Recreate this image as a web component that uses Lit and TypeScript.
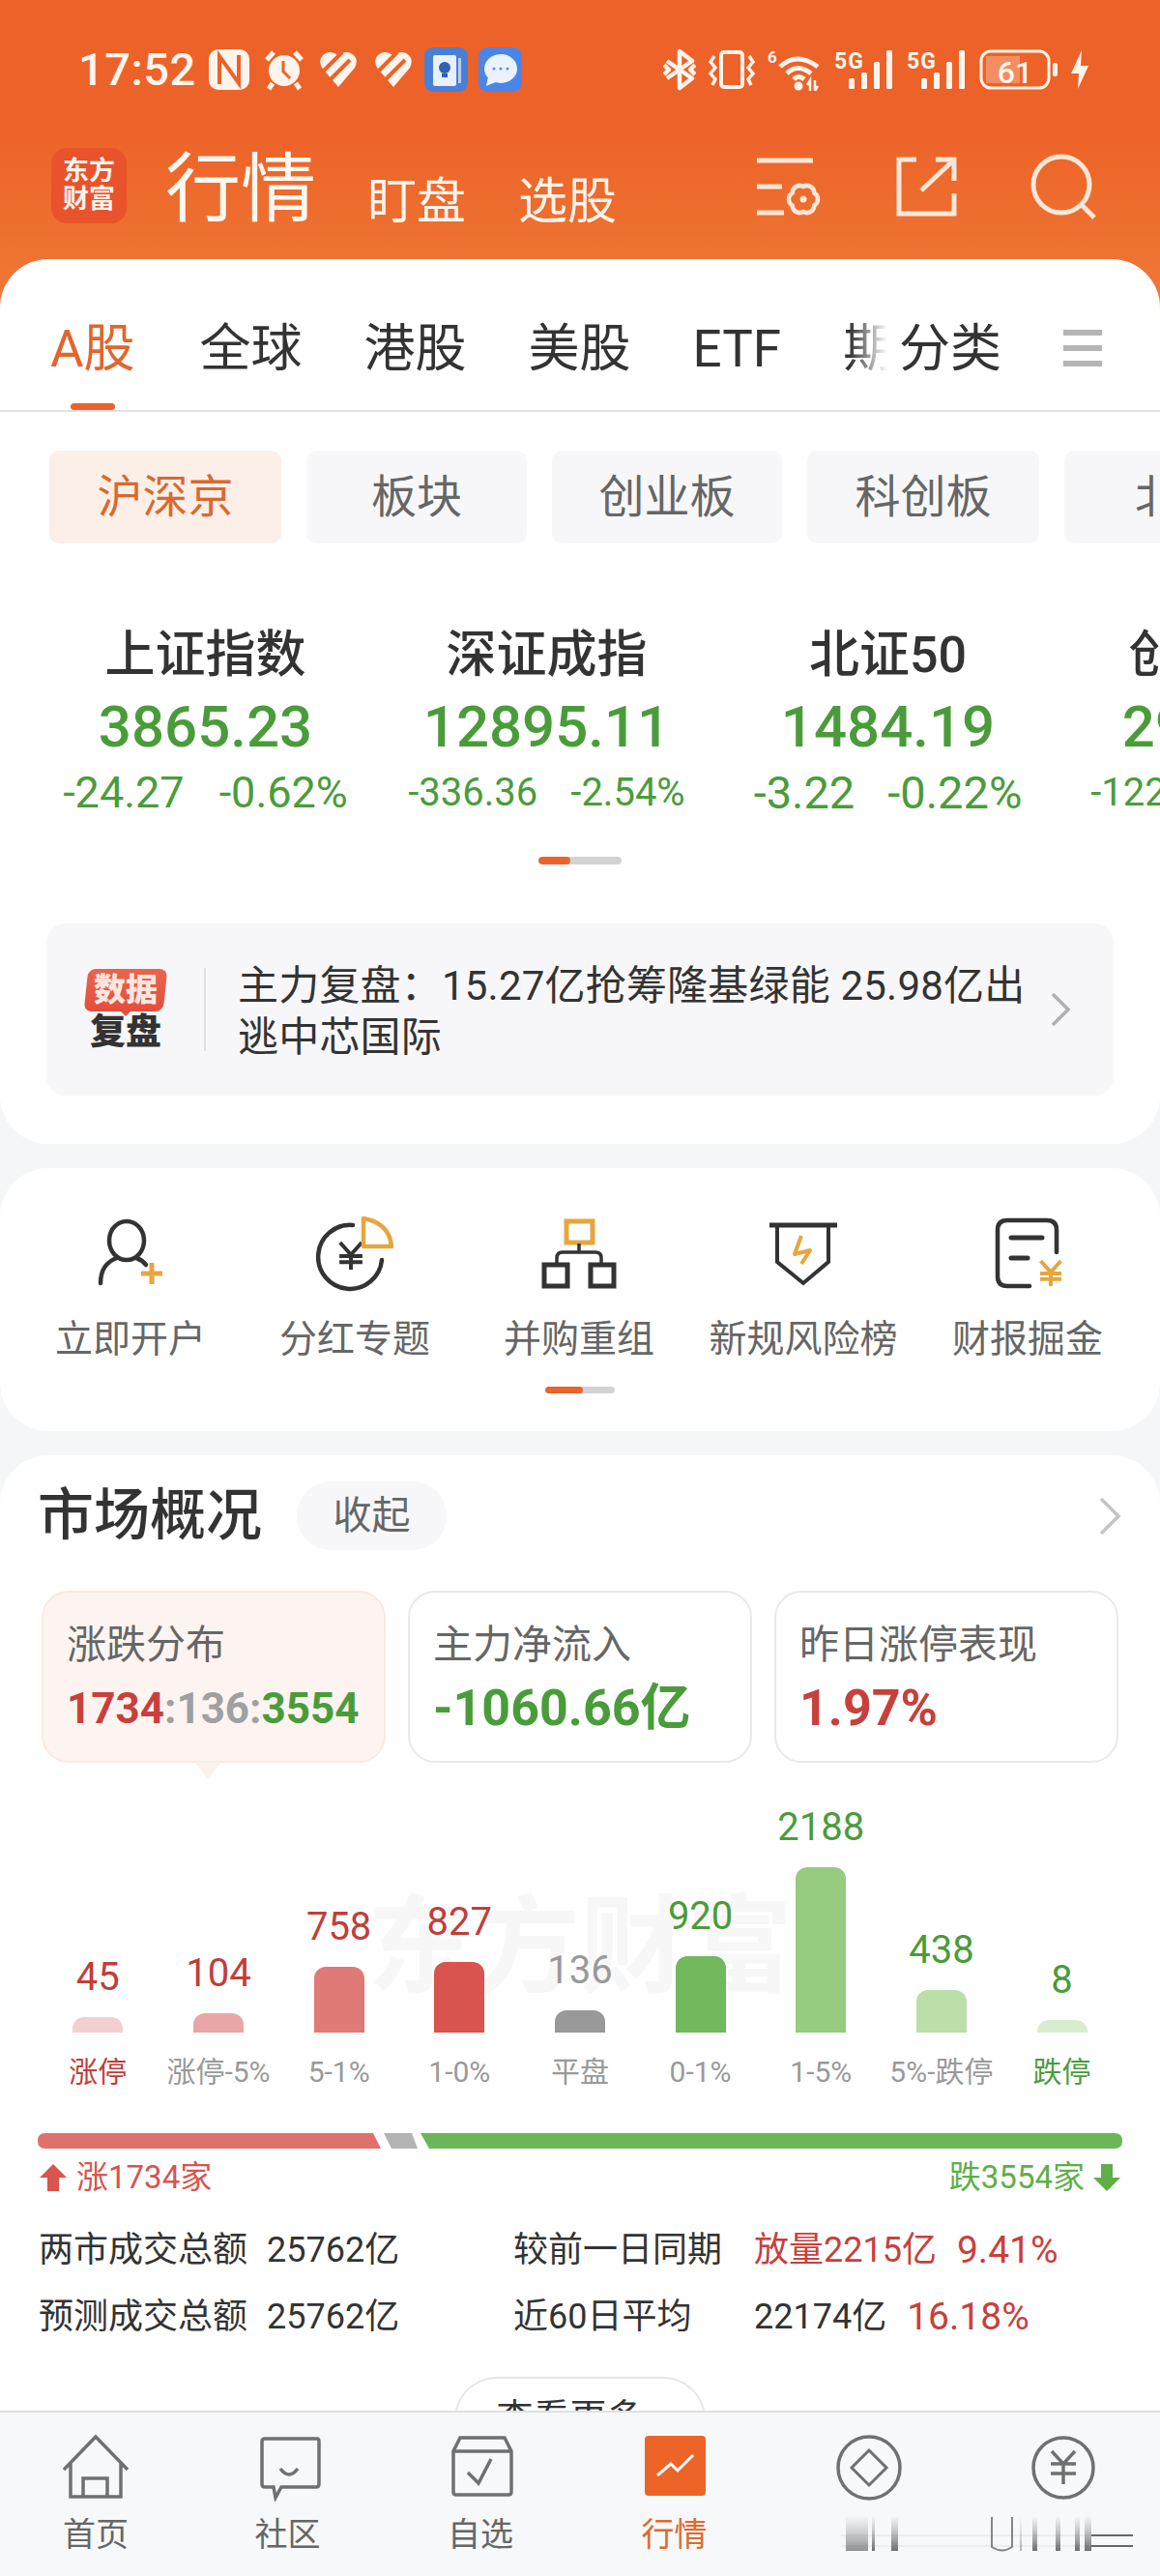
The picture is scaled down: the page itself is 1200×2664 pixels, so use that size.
import { LitElement, html, css, svg } from "lit";
import { customElement } from "lit/decorators.js";

const tabs = ["全球", "港股", "美股", "ETF"];
const chips = [
  { t: "板块", w: 228 },
  { t: "创业板", w: 238 },
  { t: "科创板", w: 240 },
  { t: "北证", w: 240 },
];
const indices = [
  { n: "上证指数", p: "3865.23", a: "-24.27", b: "-0.62%", s: 45, g: 36 },
  { n: "深证成指", p: "12895.11", a: "-336.36", b: "-2.54%", s: 40, g: 34 },
  { n: "北证50", p: "1484.19", a: "-3.22", b: "-0.22%", s: 47, g: 34 },
  { n: "创业板指", p: "2964.33", a: "-122.41", b: "-3.97%", s: 40, g: 34 },
];
const bars = [
  { v: "45", h: 16, c: "#f3d0d0", t: "#c23d3a", l: "涨停", lc: "#c23d3a" },
  { v: "104", h: 20, c: "#e8a6a6", t: "#c23d3a", l: "涨停-5%", lc: "#999" },
  { v: "758", h: 68, c: "#e07a76", t: "#c23d3a", l: "5-1%", lc: "#999" },
  { v: "827", h: 73, c: "#d9534f", t: "#c23d3a", l: "1-0%", lc: "#999" },
  { v: "136", h: 23, c: "#999", t: "#999", l: "平盘", lc: "#999" },
  { v: "920", h: 79, c: "#72b85c", t: "#4a9c3a", l: "0-1%", lc: "#999" },
  { v: "2188", h: 171, c: "#96cb80", t: "#4a9c3a", l: "1-5%", lc: "#999" },
  { v: "438", h: 44, c: "#badfa8", t: "#4a9c3a", l: "5%-跌停", lc: "#999" },
  { v: "8", h: 13, c: "#d8edcd", t: "#4a9c3a", l: "跌停", lc: "#4a9c3a" },
];

const D = "#333";
const G = "#e6a63f";
const yen = (x: number, y: number, s: number, c: string, w: number) => svg`
  <path d="M${x - s * 0.8} ${y - s} L${x} ${y - s * 0.1} L${x + s * 0.8} ${y - s} M${x - s * 0.85} ${y} H${x + s * 0.85} M${x - s * 0.85} ${y + s * 0.45} H${x + s * 0.85} M${x} ${y - s * 0.1} V${y + s}" fill="none" stroke="${c}" stroke-width="${w}"/>`;

const shortcutIcons = [
  svg`<ellipse cx="36" cy="26" rx="18" ry="20" fill="none" stroke="${D}" stroke-width="4.5"/>
      <path d="M9 70 Q9 50 26 44 M46 44 Q52 46 56 51" fill="none" stroke="${D}" stroke-width="4.5" stroke-linecap="round"/>
      <path d="M62 49 V71 M51 60 H73" fill="none" stroke="${G}" stroke-width="5"/>`,
  svg`<path d="M38 10 A33 33 0 1 0 68 46" fill="none" stroke="${D}" stroke-width="4.5" stroke-linecap="round"/>
      ${yen(36, 42, 14, D, 4)}
      <path d="M49 3 Q76 8 78 32 H49 Z" fill="none" stroke="${G}" stroke-width="4.5" stroke-linejoin="round"/>`,
  svg`<rect x="27" y="6" width="27" height="22" fill="none" stroke="${G}" stroke-width="5"/>
      <path d="M40 29 V38 M17 50 V44 Q17 38 23 38 H57 Q63 38 63 44 V50" fill="none" stroke="${D}" stroke-width="3.5"/>
      <rect x="4" y="51" width="24" height="22" fill="none" stroke="${D}" stroke-width="5"/>
      <rect x="52" y="51" width="24" height="22" fill="none" stroke="${D}" stroke-width="5"/>`,
  svg`<path d="M13 9 V48 L40 70 L66 48 V9" fill="none" stroke="${D}" stroke-width="4"/>
      <path d="M5 10 H75" stroke="${D}" stroke-width="5"/>
      <path d="M38 21 L31 40 L47 36 L38 50" fill="none" stroke="${G}" stroke-width="4" stroke-linejoin="round"/>`,
  svg`<path d="M70 38 V15 Q70 5 60 5 H19 Q9 5 9 15 V63 Q9 73 19 73 H42" fill="none" stroke="${D}" stroke-width="4.5" stroke-linecap="round"/>
      <path d="M23 23 H55 M23 44 H40" stroke="${D}" stroke-width="5" stroke-linecap="round"/>
      ${yen(64, 60, 13, G, 4)}`,
];
const shortcuts = ["立即开户", "分红专题", "并购重组", "新规风险榜", "财报掘金"];

const navIcons = [
  svg`<path d="M2 37 L35 3 L68 37 M9 29 V65 H61 V29 M22 65 V46 H47 V65" fill="none" stroke="#707070" stroke-width="3.5"/>`,
  svg`<path d="M11 5 H65 Q67 5 67 8 V52 Q67 55 64 55 H28 L22 66 L20 55 H11 Q8 55 8 52 V8 Q8 5 11 5 Z M27 36 Q36 48 45 36" fill="none" stroke="#707070" stroke-width="3.5"/>`,
  svg`<path d="M14 4 H60 L67 18 V60 Q67 63 64 63 H10 Q7 63 7 60 V18 Z M7 18 H67 M22 40 L33 51 L46 26" fill="none" stroke="#707070" stroke-width="3.5"/>`,
  svg`<rect x="4" y="2" width="63" height="62" rx="4" fill="#ec6427"/><path d="M17 43 L31 31 L38 38 L54 22" fill="none" stroke="#fff" stroke-width="3"/>`,
  svg`<circle cx="35" cy="35" r="32" fill="none" stroke="#707070" stroke-width="3.5"/><path d="M35 17 L53 35 L35 53 L17 35 Z" fill="none" stroke="#707070" stroke-width="3"/>`,
  svg`<circle cx="35" cy="35" r="31" fill="none" stroke="#707070" stroke-width="3.5"/><path d="M23 18 L35 31 L47 18 M22 31 H48 M22 41 H48 M35 31 V52" fill="none" stroke="#707070" stroke-width="3.5"/>`,
];
const navs = ["首页", "社区", "自选", "行情", "", ""];

const W = "#fff4ec";
const fiveG = svg`<text x="0" y="21" font-size="23" font-weight="700" font-family="Roboto" fill="${W}" textLength="30">5G</text><rect x="15" y="31" width="6" height="11" rx="1.5" fill="${W}"/><rect x="28" y="25" width="6" height="17" rx="1.5" fill="${W}"/><rect x="41" y="14" width="6" height="28" rx="1.5" fill="${W}"/><rect x="54" y="2" width="6" height="40" rx="1.5" fill="${W}"/>`;
const statusRight = [
  { w: 34, g: svg`<path d="M4 13 L30 31 L17 41 V3 L30 13 L4 31 M1 17 L6 22 L1 27 M33 17 L28 22 L33 27" fill="none" stroke="${W}" stroke-width="4.5" stroke-linejoin="round"/>` },
  { w: 50, g: svg`<rect x="14" y="4" width="22" height="36" rx="3" fill="none" stroke="${W}" stroke-width="4"/><path d="M7 8 L3 14 L8 20 L3 26 L8 32 L5 38 M43 8 L47 14 L42 20 L47 26 L42 32 L45 38" fill="none" stroke="${W}" stroke-width="3.5"/>` },
  { w: 57, g: svg`<text x="0" y="15" font-size="17" font-weight="700" font-family="Roboto" fill="${W}">6</text><path d="M13 19 Q30 3 52 19 M20 26 Q31 15 45 26 M27 32 Q32 27 38 32" fill="none" stroke="${W}" stroke-width="5"/><circle cx="32" cy="39" r="4.5" fill="${W}"/><path d="M44 44 V33 L41 38 M49 33 V44 L52 39" fill="none" stroke="${W}" stroke-width="2.5"/>` },
  { w: 63, g: fiveG },
  { w: 63, g: fiveG },
  { w: 82, g: svg`<rect x="2" y="3" width="70" height="38" rx="10" fill="none" stroke="${W}" stroke-width="3"/><path d="M7 8 H42 V36 H7 Z" fill="${W}" opacity=".3"/><text x="37" y="36" text-anchor="middle" font-size="32" font-weight="500" font-family="Roboto" fill="${W}">61</text><rect x="76" y="15" width="5" height="14" rx="2" fill="${W}"/>` },
  { w: 20, g: svg`<path d="M12 2 L1 26 H9 L8 42 L19 18 H11 Z" fill="${W}"/>` },
];

@customElement("app-root")
export class AppRoot extends LitElement {
  static styles = css`
    :host { display: block; width: 1200px; height: 2664px; overflow: hidden; background: #f5f6f8;
      font-family: Roboto, "Noto Sans CJK SC", sans-serif; color: #333; }
    .page { height: 2664px; display: flex; flex-direction: column; position: relative; }
    .main { flex: 1; min-height: 0; overflow: hidden; }
    svg { display: block; flex: none; }

    .top { background: linear-gradient(#ed6228 0, #ed6228 130px, #ee7b37 330px) no-repeat; background-size: 100% 330px; }
    .status { display: flex; align-items: center; height: 48px; padding: 48px 73px 0 81px; }
    .time { font-size: 47px; font-weight: 500; line-height: 48px; width: 135px; letter-spacing: .5px; color: #fff4ec; }
    .sl { display: flex; align-items: center; gap: 15px; }
    .sr { display: flex; align-items: center; gap: 12px; margin-left: auto; }
    .head { display: flex; align-items: flex-end; height: 80px; padding: 57px 66px 35px 53px; color: #fff4ec; }
    .logo { width: 78px; height: 78px; border-radius: 16px; background: #e8532b; display: flex; flex-direction: column; align-items: center; justify-content: center; font-size: 27px; line-height: 29px; font-weight: 700; margin-bottom: 2px; }
    .title { font-size: 78px; line-height: 84px; margin: 0 0 -6px 40px; color: #fff7f0; }
    .sub { font-size: 51px; line-height: 54px; margin-left: 53px; margin-bottom: -3px; }
    .sub + .sub { margin-left: 54px; }
    .tools { display: flex; align-items: center; margin-left: auto; align-self: center; gap: 76px; }

    .card { background: #fff; border-radius: 50px; }
    .tabs { display: flex; height: 156px; padding: 0 0 0 52px; border-bottom: 2px solid #e2e2e2; box-sizing: content-box; overflow: hidden; }
    .tabscroll { display: flex; gap: 64px; width: 866px; overflow: hidden; padding-top: 63px; flex: none;
      -webkit-mask-image: linear-gradient(90deg, #000 95.5%, transparent 100%); mask-image: linear-gradient(90deg, #000 95.5%, transparent 100%); }
    .tab { font-size: 53px; line-height: 60px; flex: none; display: flex; flex-direction: column; color: #333; }
    .tab.on { color: #e0662f; margin-right: 3px; }
    .tab i { display: block; width: 46px; height: 7px; border-radius: 4px; background: #e8642c; margin: 26px auto 0; }
    .tabextra { font-size: 53px; line-height: 60px; padding-top: 63px; flex: none; margin-left: 12px; color: #333; }
    .menu { margin: 72px 0 0 64px; flex: none; }

    .chips { display: flex; gap: 26px; margin: 40px 0 0 51px; width: 1149px; overflow: hidden; }
    .chip { height: 96px; line-height: 96px; flex: none; background: #f7f7f9; border-radius: 10px; text-align: center; font-size: 47px; color: #666; }
    .chip.on { background: #fcefe7; color: #d9692e; width: 240px; }

    .indices { display: flex; margin-top: 86px; width: 1200px; overflow: hidden; padding-left: 36px; box-sizing: border-box; }
    .ix { flex: none; width: 353px; display: flex; flex-direction: column; align-items: center; }
    .ix b { font-size: 52px; line-height: 60px; font-weight: 500; color: #333; }
    .ix .p { font-size: 60px; line-height: 70px; margin-top: 9px; font-weight: 500; color: #4a9c3a; }
    .ix .c { display: flex; align-items: center; line-height: 50px; margin-top: 8px; color: #4a9c3a; white-space: nowrap; }
    .dots { width: 86px; height: 8px; border-radius: 4px; background: #d2d3d5; overflow: hidden; }
    .dots i { display: block; height: 100%; background: #e8642c; border-radius: 4px; }
    .d1 { margin: 41px auto 0; }
    .banner { margin: 61px 48px 0; height: 178px; background: #f7f7f9; border-radius: 20px; display: flex; align-items: center; }
    .blogo { width: 88px; margin-left: 38px; display: flex; flex-direction: column; align-items: center; }
    .badge { position: relative; display: block; width: 82px; height: 44px; color: #fbe6df; font-size: 33px; line-height: 44px; font-weight: 900; text-align: center; }
    .badge span { position: relative; }
    .badge::before { content: ""; position: absolute; inset: 0; border-radius: 8px; background: linear-gradient(#e8654f, #e54d3d); transform: skewX(-6deg); }
    .badge::after { content: ""; position: absolute; left: 36px; bottom: -5px; border: 5px solid transparent; border-top-color: #e54d3d; border-bottom: 0; }
    .blogo b { font-size: 37px; line-height: 38px; font-weight: 900; color: #333; margin-top: 3px; }
    .sep { width: 2px; height: 86px; background: #dfe0e2; margin: 0 33px 0 37px; flex: none; }
    .btxt { font-size: 42px; line-height: 53px; width: 830px; color: #333; letter-spacing: .2px; padding-top: 3px; }
    .chev { margin-left: auto; margin-right: 44px; }
    .c1 { padding-bottom: 50px; }

    .c2 { margin-top: 25px; height: 272px; padding-top: 49px; box-sizing: border-box; }
    .sc { display: grid; grid-template-columns: repeat(5, 232px); padding-left: 19px; }
    .sc div { display: flex; flex-direction: column; align-items: center; }
    .sc span { font-size: 39px; line-height: 50px; margin-top: 23px; color: #666; white-space: nowrap; }
    .d2 { width: 72px; height: 7px; margin: 24px auto 0; }

    .c3 { margin-top: 25px; height: 1100px; padding-top: 27px; box-sizing: border-box; }
    .mh { display: flex; align-items: center; height: 71px; padding: 0 40px 0 39px; }
    .mh h2 { margin: 0; font-size: 58px; line-height: 75px; font-weight: 500; color: #333; }
    .fold { margin-left: 36px; width: 155px; height: 71px; border-radius: 35px; background: #f7f7f9; text-align: center; line-height: 72px; font-size: 40px; color: #666; }
    .mh svg { margin-left: auto; }
    .stats { display: grid; grid-template-columns: repeat(3, 356px); gap: 23px; padding-left: 43px; margin-top: 42px; }
    .stat { height: 178px; border: 2px solid #e9e9e9; border-radius: 28px; box-sizing: border-box; padding: 29px 0 0 24px; position: relative; background: #fff; }
    .stat.on { background: #fdf4f1; border-color: #fae9e3; }
    .stat.on::after { content: ""; position: absolute; left: 156px; bottom: -19px; width: 0; height: 0; border: 14px solid transparent; border-top: 18px solid #fdf1ec; border-bottom: 0; }
    .stat p { margin: 0; font-size: 41px; line-height: 50px; color: #666; }
    .stat strong { display: block; margin-top: 15px; font-size: 52px; line-height: 52px; font-weight: 700; white-space: nowrap; }
    .stat.on strong { font-size: 44px; }
    .r { color: #c8403c; } .g { color: #4a9c3a; } .n { color: #a0a0a0; }

    .chartwrap { position: relative; margin-top: 42px; }
    .mark { position: absolute; left: 380px; top: 90px; font-size: 110px; line-height: 120px; font-weight: 700; color: #f7f7f7; white-space: nowrap; }
    .chart { position: relative; display: grid; grid-template-columns: repeat(9, 124.67px); padding-left: 39px; align-items: end; height: 237px; }
    .bc { display: flex; flex-direction: column; align-items: center; }
    .bc em { font-style: normal; font-size: 40px; line-height: 50px; margin-bottom: 16px; }
    .bc i { display: block; width: 52px; border-radius: 12px 12px 0 0; }
    .labels { position: relative; display: grid; grid-template-columns: repeat(9, 124.67px); padding-left: 39px; margin-top: 21px; }
    .labels span { font-size: 30px; line-height: 40px; text-align: center; white-space: nowrap; }
    .split { margin: 43px 0 0 39px; }
    .ud { display: flex; align-items: center; padding: 0 41px; margin-top: 10px; height: 40px; font-size: 33px; line-height: 40px; }
    .ud span { display: block; }
    .ud .u { color: #d9534f; margin-left: 10px; }
    .ud .d { color: #5fae48; margin-left: auto; margin-right: 9px; }
    .rows { display: grid; grid-template-columns: 236px 255px 249px auto; padding-left: 40px; margin-top: 30px; row-gap: 19px; font-size: 36px; line-height: 50px; color: #333; }
    .rows div { white-space: nowrap; }
    .rows .v { display: flex; gap: 21px; }
    .rows .pc { font-size: 39px; }
    .rd { color: #c8403c; }
    .more { margin: 37px auto 0; width: 260px; height: 90px; border: 2px solid #e6e6e6; border-radius: 44px; text-align: center; font-size: 38px; line-height: 80px; box-sizing: border-box; color: #333; }

    .nav { flex: none; position: relative; height: 171px; box-sizing: border-box; background: #f7f8fa; border-top: 2px solid #e0e0e0; display: grid; grid-template-columns: 198px 199px 200px 201px 201px 201px; padding: 22px 0 0 0; }
    .ni { display: flex; flex-direction: column; align-items: center; }
    .ni span { font-size: 34px; line-height: 44px; margin-top: 12px; color: #666; }
    .ni.on span { color: #dd6a2e; }
    .smear { position: absolute; left: 870px; top: 106px; }
  `;

  render() {
    return html`<div class="page">
      <div class="main">
        <div class="top">
          <div class="status">
            <div class="time">17:52</div>
            <div class="sl">
              <svg width="42" height="44" viewBox="0 0 42 44"><rect x="0" y="1" width="42" height="42" rx="10" fill="${W}"/><path d="M11 37 V8 L31 36 V7" fill="none" stroke="#ed6228" stroke-width="4"/></svg>
              <svg width="42" height="44" viewBox="0 0 42 44"><circle cx="21" cy="23" r="16" fill="${W}"/><path d="M3 12 L10 4 M39 12 L32 4 M9 36 L5 42 M33 36 L37 42" stroke="${W}" stroke-width="5"/><path d="M20 13 V24 L27 31" fill="none" stroke="#ed6228" stroke-width="3"/></svg>
              <svg width="40" height="44" viewBox="0 0 40 44"><path d="M20 40 L3 20 Q-2 10 7 5 Q14 2 20 8 Q26 2 33 5 Q42 10 37 20 Z" fill="${W}"/><path d="M4 24 L24 4 M12 32 L32 12" stroke="#ed6228" stroke-width="4"/></svg>
              <svg width="40" height="44" viewBox="0 0 40 44" style="margin-left:2px"><path d="M20 40 L3 20 Q-2 10 7 5 Q14 2 20 8 Q26 2 33 5 Q42 10 37 20 Z" fill="${W}"/><path d="M4 24 L24 4 M12 32 L32 12" stroke="#ed6228" stroke-width="4"/></svg>
              <svg width="45" height="46" viewBox="0 0 45 46" style="margin-left:-3px"><rect width="45" height="46" rx="9" fill="#4a7fd6"/><rect x="9" y="8" width="24" height="32" rx="2" fill="#e8f0fb"/><rect x="35" y="11" width="3" height="26" fill="#b8cdf0"/><circle cx="21" cy="21" r="6" fill="#2f62b5"/><rect x="18" y="27" width="6" height="4" fill="#2f62b5"/></svg>
              <svg width="45" height="46" viewBox="0 0 45 46" style="margin-left:-4px"><rect width="45" height="46" rx="9" fill="#4a86e8"/><ellipse cx="23" cy="22" rx="17" ry="15" fill="#eaf2fd"/><path d="M10 30 L8 40 L20 35 Z" fill="#eaf2fd"/><circle cx="16" cy="22" r="1.6" fill="#6a90c8"/><circle cx="23" cy="22" r="1.6" fill="#6a90c8"/><circle cx="30" cy="22" r="1.6" fill="#6a90c8"/></svg>
            </div>
            <div class="sr">
              ${statusRight.map((s) => html`<svg width="${s.w}" height="44" viewBox="0 0 ${s.w} 44">${s.g}</svg>`)}
            </div>
          </div>
          <div class="head">
            <div class="logo"><div>东方</div><div>财富</div></div>
            <div class="title">行情</div>
            <div class="sub">盯盘</div>
            <div class="sub">选股</div>
            <div class="tools">
              <svg width="68" height="62" viewBox="0 0 68 62"><path d="M0 4 H58 M0 31 H26 M0 58 H28" stroke="#fde6d6" stroke-width="5"/><path d="M48 31 A7.5 7.5 0 0 1 59.3 37.5 A7.5 7.5 0 0 1 59.3 50.5 A7.5 7.5 0 0 1 48 57 A7.5 7.5 0 0 1 36.7 50.5 A7.5 7.5 0 0 1 36.7 37.5 A7.5 7.5 0 0 1 48 31 Z" fill="none" stroke="#fde6d6" stroke-width="4.5"/><circle cx="48" cy="44" r="3.5" fill="#fde6d6"/></svg>
              <svg width="63" height="62" viewBox="0 0 63 62"><path d="M21 3 H3 V59 H60 V38 M41 3 H60 V25 M26 35 L58 5" fill="none" stroke="#fde6d6" stroke-width="5"/></svg>
              <svg width="68" height="68" viewBox="0 0 68 68"><circle cx="32" cy="32" r="29" fill="none" stroke="#fde6d6" stroke-width="5"/><path d="M53 53 L66 66" stroke="#fde6d6" stroke-width="5"/></svg>
            </div>
          </div>
          <div class="card c1">
            <div class="tabs">
              <div class="tabscroll">
                <div class="tab on">A股<i></i></div>
                ${tabs.map((t) => html`<div class="tab">${t}</div>`)}
                <div class="tab">期货</div>
              </div>
              <div class="tabextra">分类</div>
              <svg class="menu" width="40" height="40" viewBox="0 0 40 40"><path d="M0 4 H40 M0 20 H40 M0 36 H40" stroke="#b5b5b5" stroke-width="6"/></svg>
            </div>
            <div class="chips">
              <div class="chip on">沪深京</div>
              ${chips.map((c) => html`<div class="chip" style="width:${c.w}px">${c.t}</div>`)}
            </div>
            <div class="indices">
              ${indices.map((i) => html`<div class="ix">
                <b>${i.n}</b>
                <div class="p">${i.p}</div>
                <div class="c" style="font-size:${i.s}px;gap:${i.g}px"><span>${i.a}</span><span>${i.b}</span></div>
              </div>`)}
            </div>
            <div class="dots d1"><i style="width:38%"></i></div>
            <div class="banner">
              <div class="blogo"><div class="badge"><span>数据</span></div><b>复盘</b></div>
              <div class="sep"></div>
              <div class="btxt">主力复盘：15.27亿抢筹隆基绿能 25.98亿出逃中芯国际</div>
              <svg class="chev" width="22" height="38" viewBox="0 0 22 38"><path d="M3 3 L19 19 L3 35" fill="none" stroke="#b0b0b0" stroke-width="3.5"/></svg>
            </div>
          </div>
        </div>
        <div class="card c2">
          <div class="sc">
            ${shortcuts.map((t, i) => html`<div><svg width="80" height="80" viewBox="0 0 80 80">${shortcutIcons[i]}</svg><span>${t}</span></div>`)}
          </div>
          <div class="dots d2"><i style="width:54%"></i></div>
        </div>
        <div class="card c3">
          <div class="mh">
            <h2>市场概况</h2>
            <div class="fold">收起</div>
            <svg width="24" height="40" viewBox="0 0 24 40"><path d="M3 2 L21 20 L3 38" fill="none" stroke="#c4c4c4" stroke-width="3.5"/></svg>
          </div>
          <div class="stats">
            <div class="stat on"><p>涨跌分布</p><strong><span class="r">1734</span><span class="n">:136:</span><span class="g">3554</span></strong></div>
            <div class="stat"><p>主力净流入</p><strong class="g">-1060.66亿</strong></div>
            <div class="stat"><p>昨日涨停表现</p><strong class="r">1.97%</strong></div>
          </div>
          <div class="chartwrap">
            <div class="mark">东方财富</div>
            <div class="chart">
              ${bars.map((b) => html`<div class="bc"><em style="color:${b.t}">${b.v}</em><i style="height:${b.h}px;background:${b.c}"></i></div>`)}
            </div>
            <div class="labels">
              ${bars.map((b) => html`<span style="color:${b.lc}">${b.l}</span>`)}
            </div>
          </div>
          <svg class="split" width="1122" height="16" viewBox="0 0 1122 16">
            <path d="M8 0 H347 L355 16 H8 Q0 16 0 8 Q0 0 8 0 Z" fill="#e0706b"/>
            <path d="M358 0 H387 L393 16 H366 Z" fill="#b4b4b4"/>
            <path d="M396 0 H1114 Q1122 0 1122 8 Q1122 16 1114 16 H405 Z" fill="#6cb65a"/>
          </svg>
          <div class="ud">
            <svg width="28" height="30" viewBox="0 0 28 30"><path d="M14 1 L28 15 H20 V29 H8 V15 H0 Z" fill="#d9534f"/></svg>
            <span class="u">涨1734家</span>
            <span class="d">跌3554家</span>
            <svg width="28" height="30" viewBox="0 0 28 30"><path d="M14 29 L28 15 H20 V1 H8 V15 H0 Z" fill="#5fae48"/></svg>
          </div>
          <div class="rows">
            <div>两市成交总额</div><div>25762亿</div><div>较前一日同期</div><div class="v rd"><span>放量2215亿</span><span class="pc">9.41%</span></div>
            <div>预测成交总额</div><div>25762亿</div><div>近60日平均</div><div class="v"><span>22174亿</span><span class="rd pc">16.18%</span></div>
          </div>
          <div class="more">查看更多 ›</div>
        </div>
      </div>
      <div class="nav">
        ${navs.map((t, i) => html`<div class="ni ${i === 3 ? "on" : ""}"><svg width="70" height="70" viewBox="0 0 70 70">${navIcons[i]}</svg>${t ? html`<span>${t}</span>` : ""}</div>`)}
        <svg class="smear" width="305" height="40" viewBox="0 0 305 40">
          <defs><linearGradient id="sg" x1="0" y1="0" x2="0" y2="1"><stop offset="0" stop-color="#888" stop-opacity=".05"/><stop offset="1" stop-color="#555" stop-opacity=".85"/></linearGradient></defs>
          <path d="M0 21 H260 M0 32 H260" stroke="#e2e2e2" stroke-width="1"/>
          <rect x="5" y="2" width="23" height="35" fill="url(#sg)" opacity=".75"/>
          <rect x="32" y="2" width="3" height="35" fill="url(#sg)"/>
          <rect x="52" y="2" width="7" height="35" fill="url(#sg)"/>
          <path d="M156 2 V33 Q167 40 177 33 V2" fill="none" stroke="#555" stroke-opacity=".7" stroke-width="2"/>
          <rect x="185" y="2" width="2" height="35" fill="url(#sg)" opacity=".5"/>
          <rect x="198" y="2" width="5" height="35" fill="url(#sg)"/>
          <rect x="222" y="2" width="5" height="35" fill="url(#sg)"/>
          <rect x="242" y="2" width="5" height="35" fill="url(#sg)"/>
          <rect x="252" y="2" width="7" height="35" fill="url(#sg)"/>
          <path d="M259 21 H302 M259 32 H302" stroke="#666" stroke-width="2"/>
        </svg>
      </div>
    </div>`;
  }
}
